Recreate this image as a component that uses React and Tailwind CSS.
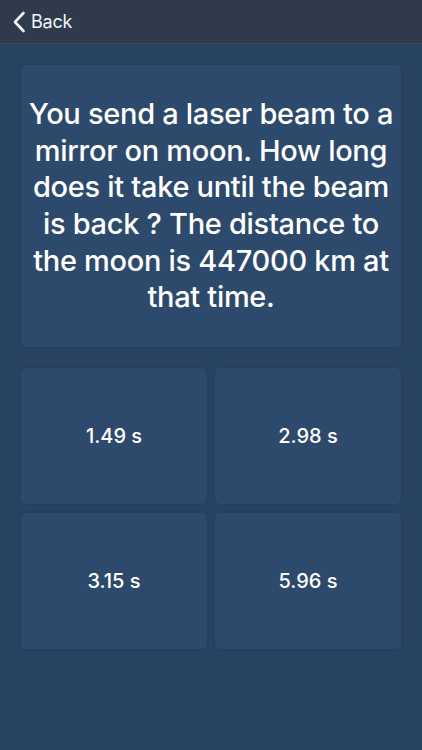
import React from 'react';

const answers = ['1.49 s', '2.98 s', '3.15 s', '5.96 s'];

const App = () => {
  return (
    <div
      className="w-[422px] h-[750px] bg-[#284261] flex flex-col text-white"
      style={{ fontFamily: 'Inter, "Liberation Sans", sans-serif' }}
    >
      <div className="h-[44px] bg-[#2f3b4c] border-b border-[#3a4c63] flex items-center pl-[12px] shrink-0">
        <svg width="14" height="22" viewBox="0 0 14 22" fill="none">
          <path d="M11.5 2 L3 11 L11.5 20" stroke="#f2f4f7" strokeWidth="2.6" strokeLinecap="round" strokeLinejoin="round" />
        </svg>
        <span className="ml-[5px] text-[18px] text-[#f2f4f7] tracking-[-0.2px]">Back</span>
      </div>

      <div className="px-[21px] pt-[21px] flex flex-col gap-[21px]">
        <div className="h-[282px] bg-[#2d4a6c] rounded-[5px] shadow-[0_0_3px_rgba(0,0,0,0.12)] flex items-center justify-center px-[7px]">
          <p className="text-center text-[29px] leading-[36.7px] font-medium tracking-[-0.3px]">
            You send a laser beam to a mirror on moon. How long does it take until the beam is back ? The distance to the moon is 447000 km at that time.
          </p>
        </div>

        <div className="grid grid-cols-2 gap-x-[8px] gap-y-[9px]">
          {answers.map((a) => (
            <div
              key={a}
              className="h-[136px] bg-[#2d4a6c] rounded-[5px] shadow-[0_0_3px_rgba(0,0,0,0.12)] flex items-center justify-center"
            >
              <span className="text-[20px] font-medium">{a}</span>
            </div>
          ))}
        </div>
      </div>
    </div>
  );
};

export default App;
